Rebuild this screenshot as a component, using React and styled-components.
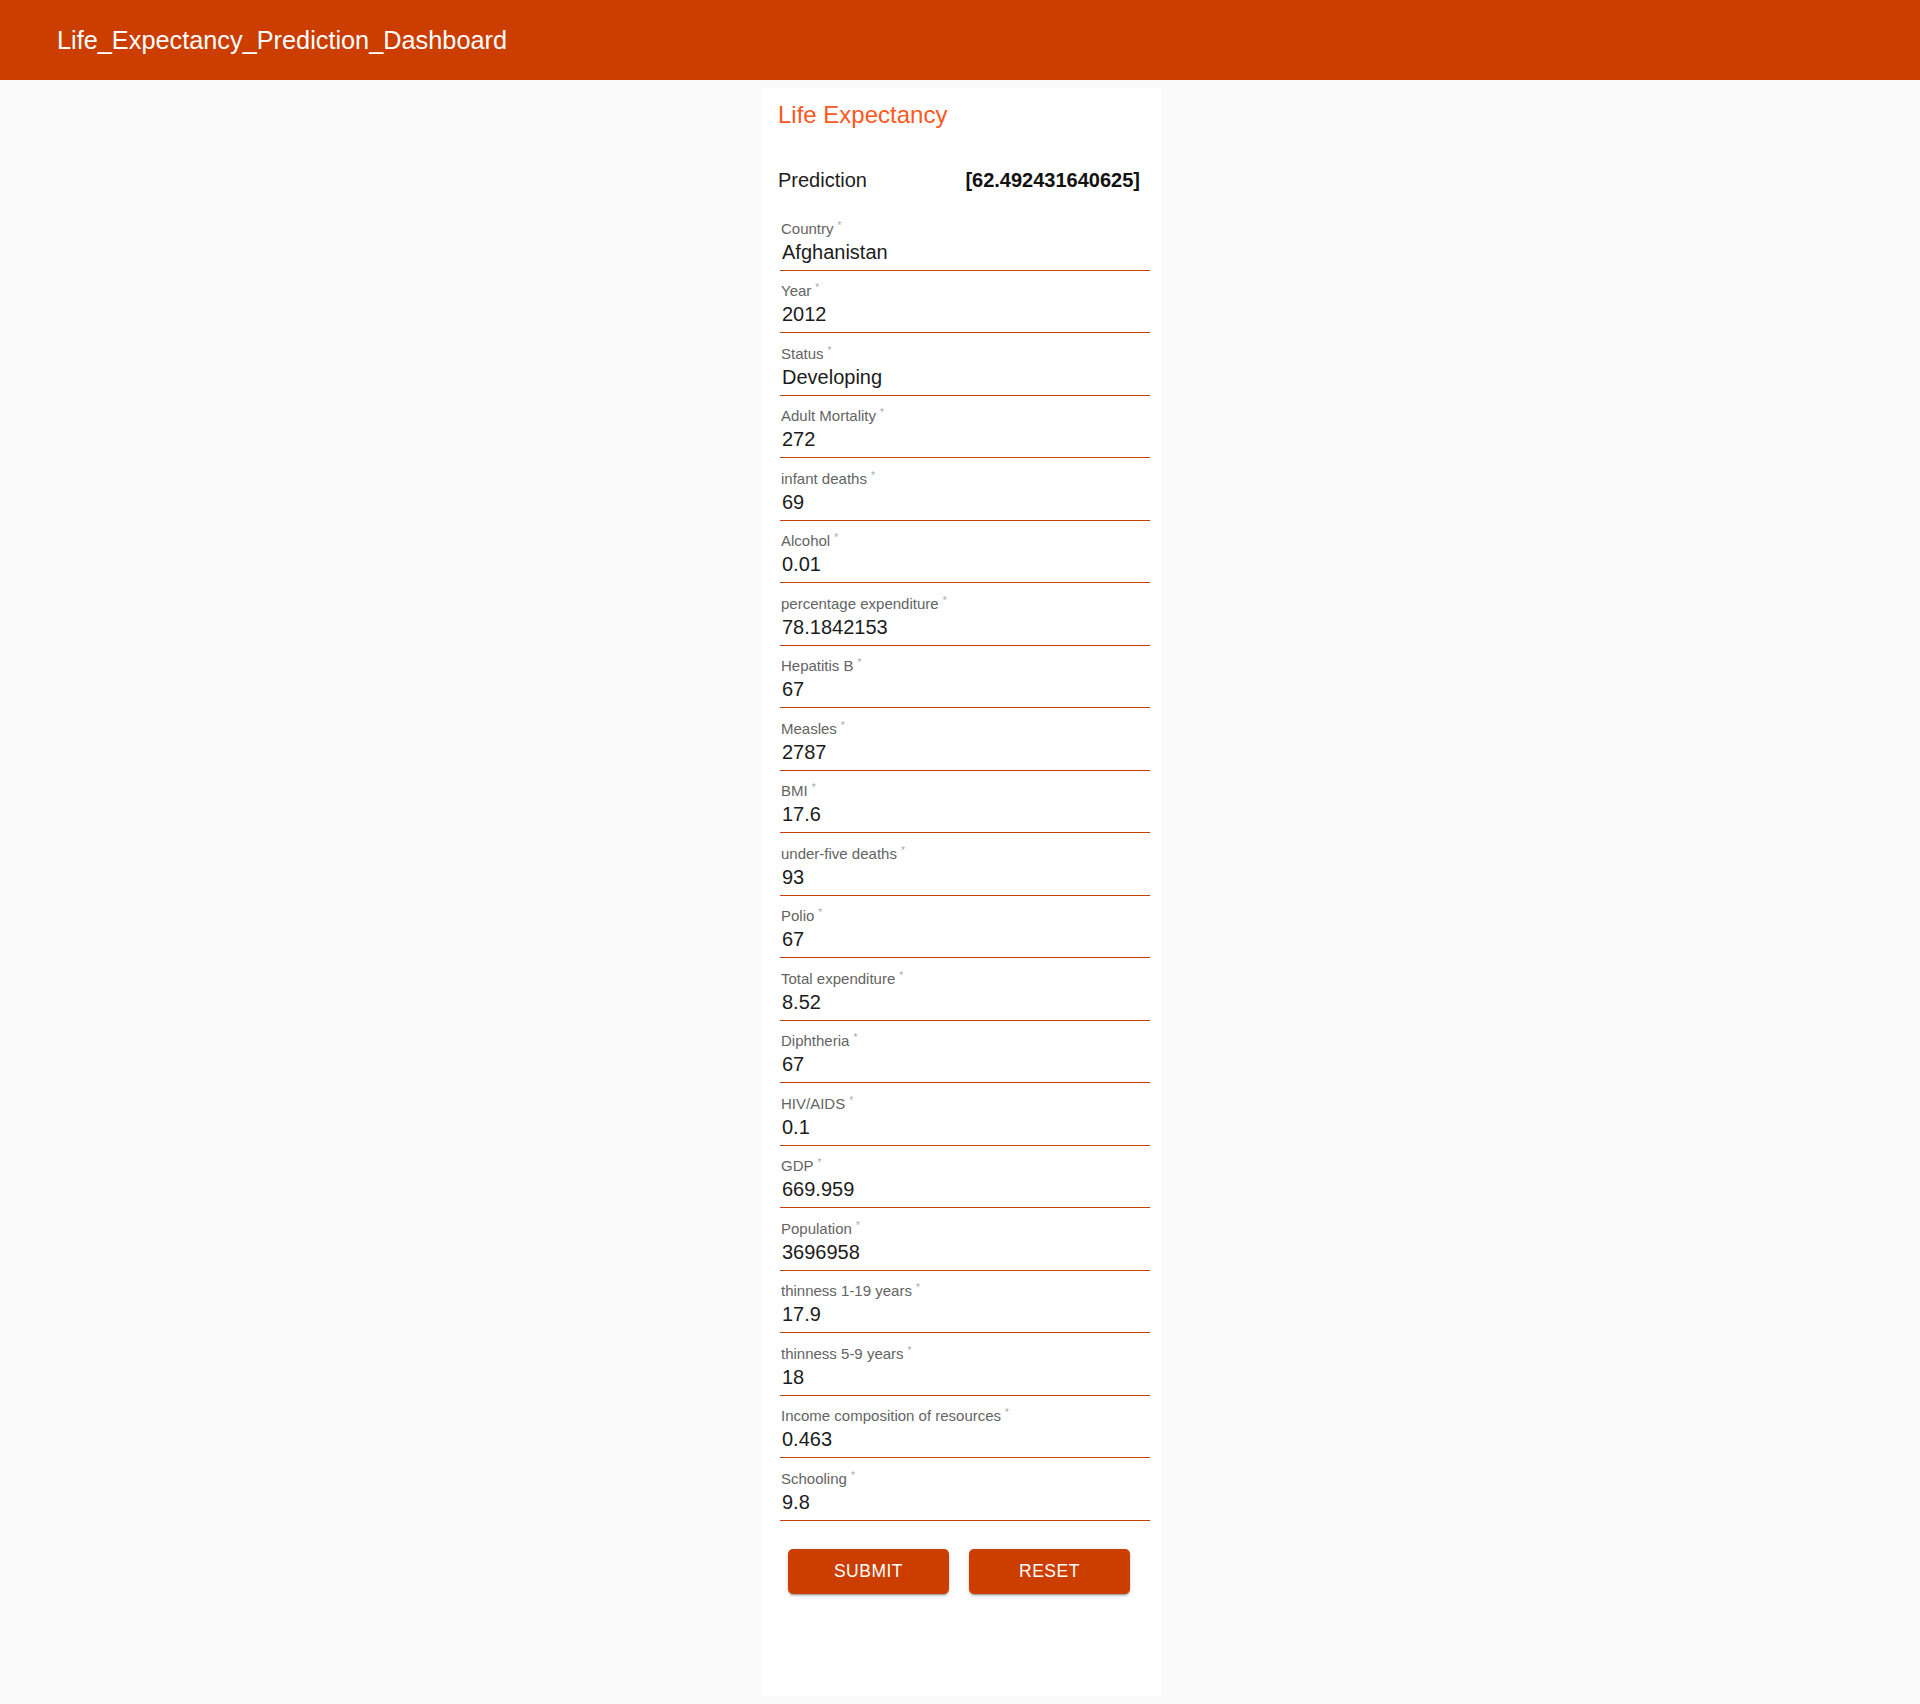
import React from "react";
import styled, { createGlobalStyle } from "styled-components";

const GlobalStyle = createGlobalStyle`
  * {
    box-sizing: border-box;
  }
  body {
    margin: 0;
    background-color: #fafafa;
    font-family: "Liberation Sans", Arial, sans-serif;
  }
`;

const AppBar = styled.header`
  display: flex;
  align-items: center;
  height: 80px;
  padding-left: 57px;
  background-color: #cc3d00;
`;

const AppTitle = styled.h1`
  margin: 0;
  font-size: 25.3px;
  font-weight: 400;
  color: #ffffff;
`;

const Card = styled.main`
  display: flex;
  flex-direction: column;
  width: 400px;
  margin: 8px 0 8px calc(50% - 199px);
  padding: 13px 0 102px;
  background-color: #ffffff;
`;

const CardTitle = styled.h2`
  margin: 0 0 39px 17px;
  font-size: 24px;
  line-height: 28px;
  font-weight: 400;
  color: #ff5722;
`;

const PredictionRow = styled.div`
  display: flex;
  justify-content: space-between;
  margin: 0 21px 16px 17px;
  font-size: 20px;
  line-height: 24px;
  color: #1d1d1d;
`;

const PredictionValue = styled.span`
  font-weight: 700;
  color: #111111;
`;

const Fields = styled.form`
  display: flex;
  flex-direction: column;
  width: 370px;
  margin-left: 19px;
`;

const Field = styled.label`
  display: flex;
  flex-direction: column;
  gap: 2px;
  height: 62.5px;
  padding: 11.5px 0 6px;
  border-bottom: 1px solid #c84000;
`;

const FieldLabel = styled.span`
  padding-left: 1px;
  font-size: 15px;
  line-height: 18px;
  color: #646464;
`;

const Asterisk = styled.span`
  margin-left: 4px;
  font-size: 10px;
  vertical-align: top;
  line-height: 12px;
  color: #a8a8a8;
`;

const FieldInput = styled.input`
  height: 24px;
  padding: 0 0 0 2px;
  border: none;
  outline: none;
  background: transparent;
  font-family: inherit;
  font-size: 20px;
  line-height: 24px;
  color: #1c1c1c;
`;

const Actions = styled.div`
  display: flex;
  gap: 20px;
  margin: 28px 0 0 8px;
`;

const Button = styled.button`
  display: flex;
  align-items: center;
  justify-content: center;
  width: 161px;
  height: 45px;
  border: none;
  border-radius: 5px;
  background-color: #cc3d00;
  color: #ffffff;
  font-family: inherit;
  font-size: 17.5px;
  letter-spacing: 0.5px;
  text-transform: uppercase;
  box-shadow: 0px 3px 1px -2px rgba(0, 0, 0, 0.2),
    0px 2px 2px 0px rgba(0, 0, 0, 0.14), 0px 1px 5px 0px rgba(0, 0, 0, 0.12);
  cursor: pointer;
`;

const fields = [
  ["Country", "Afghanistan"],
  ["Year", "2012"],
  ["Status", "Developing"],
  ["Adult Mortality", "272"],
  ["infant deaths", "69"],
  ["Alcohol", "0.01"],
  ["percentage expenditure", "78.1842153"],
  ["Hepatitis B", "67"],
  ["Measles", "2787"],
  ["BMI", "17.6"],
  ["under-five deaths", "93"],
  ["Polio", "67"],
  ["Total expenditure", "8.52"],
  ["Diphtheria", "67"],
  ["HIV/AIDS", "0.1"],
  ["GDP", "669.959"],
  ["Population", "3696958"],
  ["thinness 1-19 years", "17.9"],
  ["thinness 5-9 years", "18"],
  ["Income composition of resources", "0.463"],
  ["Schooling", "9.8"],
];

export default function App() {
  return (
    <>
      <GlobalStyle />
      <AppBar>
        <AppTitle>Life_Expectancy_Prediction_Dashboard</AppTitle>
      </AppBar>
      <Card>
        <CardTitle>Life Expectancy</CardTitle>
        <PredictionRow>
          <span>Prediction</span>
          <PredictionValue>[62.492431640625]</PredictionValue>
        </PredictionRow>
        <Fields onSubmit={(e) => e.preventDefault()}>
          {fields.map(([label, value]) => (
            <Field key={label}>
              <FieldLabel>
                {label}
                <Asterisk>*</Asterisk>
              </FieldLabel>
              <FieldInput defaultValue={value} />
            </Field>
          ))}
          <Actions>
            <Button type="submit">Submit</Button>
            <Button type="button">Reset</Button>
          </Actions>
        </Fields>
      </Card>
    </>
  );
}
